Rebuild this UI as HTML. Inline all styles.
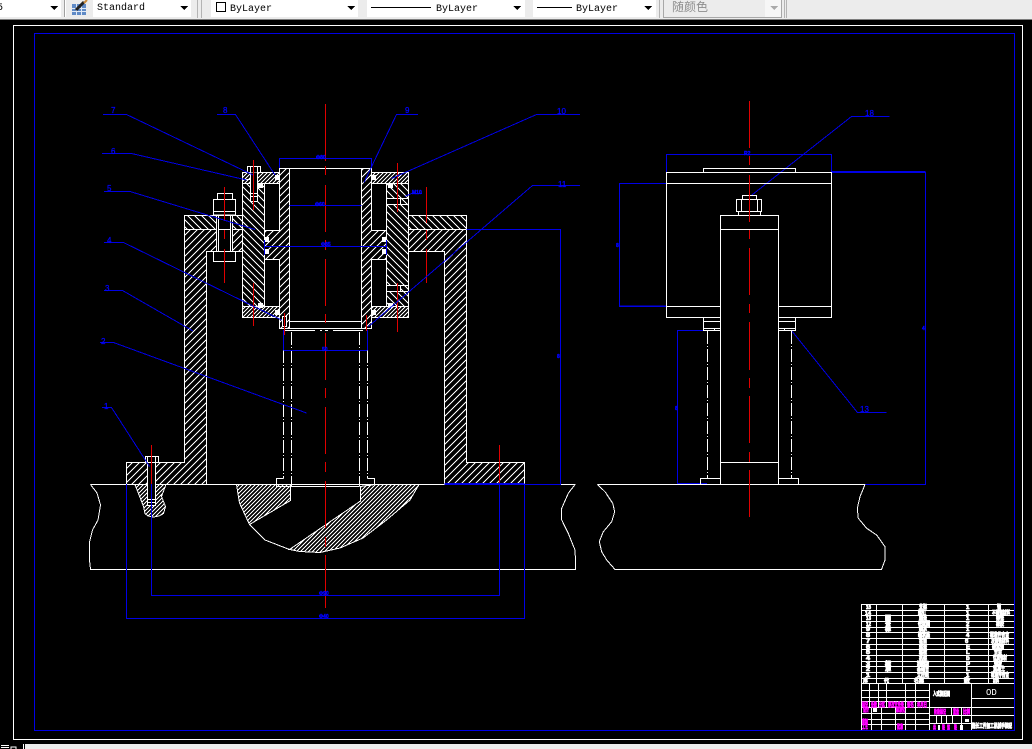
<!DOCTYPE html>
<html><head><meta charset="utf-8"><style>
html,body{margin:0;padding:0;background:#000;width:1032px;height:749px;overflow:hidden}
svg{display:block}
.w{stroke:#fff;fill:none}
.k{stroke:#fff;fill:#000}
.l{stroke:#0000e6;fill:none}
.r{stroke:#e00000;fill:none}
.t{font:8px "Liberation Sans",sans-serif;fill:#0000ff;stroke:#0000ff;stroke-width:.25}
.d{font:bold 5px "Liberation Sans",sans-serif;fill:#0000ff;stroke:#0000ff;stroke-width:.4}
.b{font:bold 6px "Liberation Sans","Noto Sans CJK SC",sans-serif;fill:#fff;stroke:#fff;stroke-width:.8}
.m{font:bold 6px "Liberation Sans","Noto Sans CJK SC",sans-serif;fill:#f0f;stroke:#f0f;stroke-width:.7}
.tb{font:10px "Liberation Mono",monospace;fill:#000}
</style></head><body>
<svg xmlns="http://www.w3.org/2000/svg" width="1032" height="749" viewBox="0 0 1032 749" shape-rendering="crispEdges">
<defs>
<pattern id="h1" patternUnits="userSpaceOnUse" width="7" height="7"><path d="M0 7L7 0M-1 1L1 -1M6 8L8 6" stroke="#fff" stroke-width="1"/></pattern>
<pattern id="h2" patternUnits="userSpaceOnUse" width="7" height="7"><path d="M0 0L7 7M-1 6L1 8M6 -1L8 1" stroke="#fff" stroke-width="1"/></pattern>
<pattern id="d1" patternUnits="userSpaceOnUse" width="4" height="4"><path d="M0 4L4 0M-1 1L1 -1M3 5L5 3" stroke="#fff" stroke-width="1"/></pattern>
</defs>
<rect width="1032" height="749" fill="#000"/>

<!-- toolbar -->
<rect x="0" y="0" width="1032" height="19" fill="#ececec"/>
<rect x="0" y="19" width="1032" height="1" fill="#7d7d7d"/>
<rect x="0" y="0" width="61" height="17" fill="#fff"/>
<text x="-3" y="10" class="tb">5</text>
<path d="M50 6h8l-4 4z" fill="#000"/>
<rect x="64" y="0" width="1" height="17" fill="#a0a0a0"/><rect x="65" y="0" width="1" height="17" fill="#fff"/>
<rect x="72" y="4" width="14" height="11" fill="#5f8ac6"/>
<path d="M72 8.500h14M72 11.500h14M76.500 4v11M81.500 4v11" stroke="#dfe9f6" stroke-width="1"/>
<path d="M76 10L84 2" stroke="#222" stroke-width="3" shape-rendering="auto"/>
<path d="M84 3L87 0" stroke="#c98a3c" stroke-width="2" shape-rendering="auto"/>
<rect x="93" y="0" width="98" height="17" fill="#fff"/>
<text x="97" y="10" class="tb">Standard</text>
<path d="M180 6h8l-4 4z" fill="#000"/>
<path d="M197.500 0v18M201.500 0v18" stroke="#b4b4b4"/>
<rect x="211" y="0" width="147" height="17" fill="#fff"/>
<rect x="216.500" y="2.500" width="9" height="9" fill="#fff" stroke="#000"/>
<text x="230" y="11" class="tb">ByLayer</text>
<path d="M347 6h8l-4 4z" fill="#000"/>
<rect x="367" y="0" width="158" height="17" fill="#fff"/>
<rect x="371" y="7" width="60" height="1" fill="#000"/>
<text x="436" y="11" class="tb">ByLayer</text>
<path d="M513 6h8l-4 4z" fill="#000"/>
<rect x="533" y="0" width="123" height="17" fill="#fff"/>
<rect x="537" y="7" width="35" height="1" fill="#000"/>
<text x="576" y="11" class="tb">ByLayer</text>
<path d="M644 6h8l-4 4z" fill="#000"/>
<rect x="663.500" y="-1" width="118" height="18.500" fill="#ececec" stroke="#a8a8a8"/>
<rect x="765" y="0" width="16" height="17" fill="#f6f6f6"/>
<text x="672" y="11" font-family="'Liberation Sans','Noto Sans CJK SC',sans-serif" font-size="12" fill="#8e8e8e">随颜色</text>
<path d="M770 6h8l-4 4z" fill="#aaa"/>
<path d="M659.500 0v18M784.500 0v18M786.500 0v18" stroke="#b4b4b4"/>

<!-- frames -->
<path d="M13.500 739.500V25.500H1022.500V739.500Z" class="w"/>
<path d="M34.500 730.500V33.500H1014.500V730.500Z" class="l"/>

<!-- bottom strip -->
<rect x="25" y="744" width="1007" height="5" fill="#ececec"/>
<rect x="1" y="745" width="8" height="1" fill="#fff"/><rect x="1" y="747" width="8" height="1" fill="#fff"/>
<path d="M11 749v-2h5v2" stroke="#fff" fill="none"/>
<rect x="23" y="744" width="1" height="5" fill="#fff"/>

<!-- LEFT VIEW: ground -->
<path d="M90.500 484.500H575.500" class="w"/>
<path d="M90.500 484.500L97 493L100.500 505L98 520L92.500 530L89.500 542V560L90.500 569.500H575.500L575.700 565L575 550L568.300 533.300L561.700 520V508.300L568.300 493.300L575 484.500" class="w"/>

<!-- bracket -->
<path d="M184.500 229.500H242.500V251.500H206.500V484.500H126.500V462.500H184.500Z" fill="url(#h1)" stroke="#fff"/>
<rect x="184.500" y="215.500" width="58" height="14" fill="url(#h2)" stroke="#fff"/>
<rect x="408.500" y="215.500" width="58" height="14" fill="url(#h2)" stroke="#fff"/>
<path d="M408.500 229.500H466.500V462.500H524.500V484.500H444.500V251.500H408.500Z" fill="url(#h1)" stroke="#fff"/>

<!-- housing -->
<rect x="242.500" y="183.500" width="22" height="123" fill="url(#h2)" stroke="#fff"/>
<rect x="386.500" y="183.500" width="22" height="123" fill="url(#h2)" stroke="#fff"/>
<rect x="242.500" y="172.500" width="37" height="11" fill="url(#d1)" stroke="#fff"/>
<rect x="371.500" y="172.500" width="37" height="11" fill="url(#d1)" stroke="#fff"/>
<rect x="242.500" y="306.500" width="37" height="11" fill="url(#d1)" stroke="#fff"/>
<rect x="371.500" y="306.500" width="37" height="11" fill="url(#d1)" stroke="#fff"/>

<!-- tube -->
<path d="M279.500 168.500H289.500V328.500H279.500V259.500H264.500V230.500H279.500Z" fill="url(#h1)" stroke="#fff"/>
<path d="M361.500 168.500H371.500V230.500H386.500V259.500H371.500V328.500H361.500Z" fill="url(#h1)" stroke="#fff"/>
<path d="M289.500 168.500H361.500M289.500 321.500H361.500M279.500 328.500H371.500" class="w"/>
<path d="M285 330.500h30M320 330.500h2M325 330.500h3M333 330.500h30" class="w"/>
<rect x="264.500" y="183.500" width="15" height="47" class="k"/>
<rect x="264.500" y="259.500" width="15" height="47" class="k"/>
<rect x="371.500" y="183.500" width="15" height="47" class="k"/>
<rect x="371.500" y="259.500" width="15" height="47" class="k"/>

<!-- right housing bolt holes -->
<path d="M386.500 198.500H408.500M386.500 204.500H408.500M400.500 197V205M386.500 285.500H408.500M386.500 291.500H408.500M400.500 285V292" class="w"/>
<rect x="387" y="199" width="13" height="5" fill="#000"/>
<rect x="387" y="286" width="13" height="5" fill="#000"/>

<!-- big bolt left -->
<rect x="217.500" y="193.500" width="15" height="6" class="k"/>
<rect x="213.500" y="199.500" width="22" height="15.500" class="k"/>
<path d="M213.500 211.500H235.500M224.500 199.500V211.500" class="w"/>
<rect x="216.500" y="215.500" width="16" height="36" class="k"/>
<path d="M218.500 215.500V251.500M230.500 215.500V251.500M218.500 229.500H230.500" class="w"/>
<rect x="213.500" y="251.500" width="22" height="10" class="k"/>
<path d="M224.500 251.500V261.500" class="w"/>

<!-- small bolt -->
<rect x="247.500" y="166.500" width="13" height="6" class="k"/>
<path d="M250.500 166.500V172.500M257.500 166.500V172.500" class="w"/>
<path d="M250.500 172.500V201.500H257.500V172.500" class="k"/>
<path d="M250.500 193.500H257.500M250.500 196.500H257.500" class="w"/>
<path d="M242.500 179.500H250.500" class="w"/>

<!-- balls -->
<g fill="#fff">
<rect x="275" y="175" width="5" height="5"/><rect x="258" y="183" width="5" height="5"/><rect x="264" y="237" width="5" height="5"/><rect x="264" y="249" width="5" height="5"/><rect x="258" y="303" width="5" height="5"/><rect x="275" y="310" width="5" height="5"/>
<rect x="372" y="175" width="4" height="5"/><rect x="388" y="183" width="5" height="5"/><rect x="382" y="237" width="5" height="5"/><rect x="382" y="249" width="5" height="5"/><rect x="388" y="303" width="5" height="5"/><rect x="372" y="310" width="4" height="5"/>
</g>
<rect x="282.500" y="316.500" width="4" height="10" class="k"/>

<!-- dash dot lower shaft -->
<path d="M283.500 332V478.500M291.500 332V486.500" class="w" stroke-dasharray="13 2 1 2"/>
<path d="M359.500 332V486.500M367.500 332V478.500" class="w" stroke-dasharray="13 2 1 2"/>
<path d="M283.500 478.500H276.500V486.500H359.500M367.500 478.500H374.500V484.500" class="w"/>

<!-- anchor bolt -->
<path d="M135 484.500L143.500 506.500L145 513.500L148 516L153.500 517L159 516L163.500 513.500L165.500 506.500L161.500 496.500L166 484.500Z" fill="url(#d1)" stroke="#fff"/>
<rect x="145.500" y="456.500" width="13" height="6" class="k"/>
<path d="M147.500 456.500V462.500M155.500 456.500V462.500" class="w"/>
<rect x="147.500" y="462.500" width="8" height="43" class="k"/>
<path d="M147.500 499.500H155.500M147.500 502.500H155.500" class="w"/>

<!-- ground hole hatch -->
<path d="M236.500 484.500L239.500 503L249.500 524.500L290.500 500.500V484.500Z" fill="url(#d1)" stroke="#fff"/>
<path d="M289.500 549.500L340 515L360.500 501V486.500L374.500 484.500H419L410 500L386.500 520L363 538L340 548L320 552.500L300 551.500Z" fill="url(#d1)" stroke="#fff"/>
<path d="M249.500 524.500L265 540L289.500 549.500" class="w"/>

<!-- centre / red lines -->
<path d="M325.500 104V161M325.500 166V175M325.500 185V232M325.500 240V250M325.500 259V306M325.500 314V323M325.500 333V380M325.500 388V398M325.500 407V454M325.500 462V472M325.500 481V528M325.500 537V547M325.500 555V608" class="r"/>
<path d="M224.500 187V221M224.500 230V239M224.500 249V283M253.500 160V210M253.500 283V326M397.500 163V212M397.500 283V332M426.500 187V223M426.500 230V240M426.500 249V283M284.500 313V335M366.500 315V331M151.500 445V484M499.500 445V484" class="r"/>

<!-- leaders -->
<g class="l">
<path d="M103 114.500H126.500L253 175"/>
<path d="M102 153.500H131.500L246.500 180"/>
<path d="M217 114.500H235.500L275 175"/>
<path d="M104 191.500H130L255 229.500"/>
<path d="M104 242.500H123.500L281.500 320"/>
<path d="M104 290.500H122.500L193 331"/>
<path d="M100 342.500H113.500L306.500 413"/>
<path d="M102 407.500H111.500L149.500 466.500"/>
<path d="M418 114.500H396.500L364 182.500"/>
<path d="M580 114.500H536.500L391.500 178.500"/>
<path d="M580 185.500H532.500L368.500 326.500"/>
<path d="M405 196.500L411.500 193.500H422"/>
<!-- dims -->
<path d="M279.500 158.500H371.500M279.500 158V168M371.500 158V168"/>
<path d="M289.500 205.500H361.500"/>
<path d="M264.500 246.500H386.500M264.500 240V255M386.500 240V255"/>
<path d="M283.500 350.500H367.500M283.500 330V350M367.500 330V350"/>
<path d="M151.500 484V595.500H499.500V484"/>
<path d="M126.500 484V618.500H524.500V484"/>
<path d="M444.500 484.500H560.500V229.500H466.500"/>
<path d="M444.500 483.500H524.500"/>
<!-- right view dims -->
<path d="M666.500 154.500H831.500M666.500 154V172M831.500 154V172"/>
<path d="M666 183.500H619.500V306.500H666M619.500 306H666"/>
<path d="M831 172.500H925.500V484.500H798.500M831 171.500H925.500"/>
<path d="M703 330.500H677.500V484.500H707M677 483.500H707"/>
<path d="M889.500 116.500H851.500L750 196.500"/>
<path d="M791.500 330.500L857.500 412.500H886.500"/>
</g>

<!-- blue labels -->
<text x="111" y="113" class="t">7</text>
<text x="111" y="154" class="t">6</text>
<text x="223" y="113" class="t">8</text>
<text x="107" y="191" class="t">5</text>
<text x="107" y="243" class="t">4</text>
<text x="105" y="291" class="t">3</text>
<text x="101" y="344" class="t">2</text>
<text x="104" y="409" class="t">1</text>
<text x="405" y="113" class="t">9</text>
<text x="557" y="114" class="t">10</text>
<text x="558" y="187" class="t">11</text>
<text x="865" y="116" class="t">18</text>
<text x="860" y="412" class="t">13</text>
<text x="316" y="159" class="d">Φ80</text>
<text x="315" y="206" class="d">Φ60</text>
<text x="321" y="246" class="d">Φ85</text>
<text x="322" y="351" class="d">50</text>
<text x="412" y="194" class="d">M10</text>
<text x="319" y="595" class="d">Φ90</text>
<text x="319" y="618" class="d">Φ40</text>
<text x="557" y="358" class="d">8</text>
<text x="744" y="155" class="d">R2</text>
<text x="616" y="247" class="d">8</text>
<text x="922" y="330" class="d">4</text>
<text x="675" y="410" class="d">8</text>

<!-- RIGHT VIEW -->
<path d="M597.500 484.500H865" class="w"/>
<path d="M597.500 484.500L605 491.700L612.700 503.300L614.700 511.700L611.700 521.700L603.300 531.700L599.300 541.700L601.700 551.700L606.700 560L615 569.500H881.500L885 560V546.700L876.700 535L866.700 528.300L858.300 518.300L857.300 508.300L860 496.700L865 484.500" class="w"/>
<rect x="666.500" y="172.500" width="165" height="145" class="w"/>
<rect x="703.500" y="168.500" width="92" height="4" class="w"/>
<path d="M666.500 183.500H831.500M666.500 306.500H831.500" class="w"/>
<rect x="703.500" y="317.500" width="92" height="13" class="w"/>
<path d="M703.500 321.500H795.500M703.500 328.500H795.500M714.500 328.500V331M784.500 328.500V331" class="w"/>
<rect x="720.500" y="215.500" width="58" height="269" class="k"/>
<path d="M720.500 229.500H778.500M720.500 462.500H778.500" class="w"/>
<rect x="742.500" y="195.500" width="14" height="4" class="k"/>
<rect x="736.500" y="199.500" width="25" height="12" class="k"/>
<path d="M741.500 199.500V211.500M757.500 199.500V211.500" class="w"/>
<rect x="738.500" y="211.500" width="22" height="4" class="k"/>
<path d="M707.500 331V478M791.500 331V478" class="w" stroke-dasharray="13 2 1 2"/>
<path d="M720.500 478.500H700.500V484.500M778.500 478.500H798.500V484.500" class="w"/>
<path d="M749.500 101V148M749.500 156V165M749.500 175V222M749.500 230V239M749.500 248V295M749.500 304V313M749.500 322V370M749.500 378V388M749.500 396V443M749.500 452V462M749.500 470V517" class="r"/>

<!-- TITLE BLOCK -->
<rect x="861.500" y="604.500" width="153" height="126" fill="#000" stroke="#fff"/>
<path class="w" d="M861 610.500H1014M861 615.500H1014M861 621.500H1014M861 627.500H1014M861 632.500H1014M861 638.500H1014M861 644.500H1014M861 649.500H1014M861 655.500H1014M861 661.500H1014M861 666.500H1014M861 672.500H1014M861 678.500H1014M861 683.500H1014"/>
<path class="w" d="M876.500 604V683M902.500 604V683M944.500 604V683M988.500 604V683"/>
<path class="w" d="M861 690.500H929M861 697.500H929M861 701.500H929M861 707.500H1014M861 713.500H929M861 719.500H929M861 724.500H929"/>
<path class="w" d="M869.500 683V707M878.500 683V707M886.500 683V707M905.500 683V707M915.500 683V707M871.500 707V731M881.500 707V731M895.500 707V731M905.500 707V731M915.500 707V731"/>
<path class="w" d="M929.500 683V731M971.500 683V731M971.500 698.500H1014M929.500 715.500H1014M929.500 723.500H971.500M936.500 715V723M941.500 715V723M946.500 715V723M952.500 715V723M951.500 707V715M961.500 707V731"/>

<g>
<text x="866" y="609" class="b" textLength="5" lengthAdjust="spacingAndGlyphs">15</text>
<text x="865" y="615" class="b" textLength="6" lengthAdjust="spacingAndGlyphs">14</text>
<text x="866" y="620" class="b" textLength="5" lengthAdjust="spacingAndGlyphs">13</text>
<text x="866" y="626" class="b" textLength="5" lengthAdjust="spacingAndGlyphs">12</text>
<text x="866" y="631" class="b" textLength="4" lengthAdjust="spacingAndGlyphs">9</text>
<text x="866" y="637" class="b" textLength="4" lengthAdjust="spacingAndGlyphs">8</text>
<text x="866" y="643" class="b" textLength="4" lengthAdjust="spacingAndGlyphs">7</text>
<text x="866" y="649" class="b" textLength="4" lengthAdjust="spacingAndGlyphs">6</text>
<text x="866" y="654" class="b" textLength="4" lengthAdjust="spacingAndGlyphs">5</text>
<text x="866" y="660" class="b" textLength="4" lengthAdjust="spacingAndGlyphs">4</text>
<text x="866" y="666" class="b" textLength="4" lengthAdjust="spacingAndGlyphs">3</text>
<text x="866" y="671" class="b" textLength="4" lengthAdjust="spacingAndGlyphs">2</text>
<text x="866" y="677" class="b" textLength="4" lengthAdjust="spacingAndGlyphs">1</text>
<text x="863" y="683" class="b" textLength="5" lengthAdjust="spacingAndGlyphs">序</text>

<text x="885" y="620" class="b" textLength="6" lengthAdjust="spacingAndGlyphs">图</text>
<text x="885" y="626" class="b" textLength="6" lengthAdjust="spacingAndGlyphs">号</text>
<text x="885" y="631" class="b" textLength="6" lengthAdjust="spacingAndGlyphs">标</text>
<text x="885" y="666" class="b" textLength="6" lengthAdjust="spacingAndGlyphs">标</text>
<text x="885" y="671" class="b" textLength="6" lengthAdjust="spacingAndGlyphs">准</text>
<text x="884" y="683" class="b" textLength="5" lengthAdjust="spacingAndGlyphs">代</text>

<text x="919" y="609" class="b" textLength="8" lengthAdjust="spacingAndGlyphs">支架</text>
<text x="918" y="615" class="b" textLength="8" lengthAdjust="spacingAndGlyphs">螺钉</text>
<text x="919" y="620" class="b" textLength="8" lengthAdjust="spacingAndGlyphs">端盖</text>
<text x="918" y="626" class="b" textLength="12" lengthAdjust="spacingAndGlyphs">密封圈</text>
<text x="919" y="631" class="b" textLength="8" lengthAdjust="spacingAndGlyphs">轴承</text>
<text x="918" y="637" class="b" textLength="12" lengthAdjust="spacingAndGlyphs">轴承座</text>
<text x="919" y="643" class="b" textLength="8" lengthAdjust="spacingAndGlyphs">套筒</text>
<text x="919" y="649" class="b" textLength="8" lengthAdjust="spacingAndGlyphs">螺母</text>
<text x="919" y="654" class="b" textLength="8" lengthAdjust="spacingAndGlyphs">螺栓</text>
<text x="919" y="660" class="b" textLength="8" lengthAdjust="spacingAndGlyphs">机架</text>
<text x="917" y="666" class="b" textLength="12" lengthAdjust="spacingAndGlyphs">地脚螺栓</text>
<text x="917" y="671" class="b" textLength="12" lengthAdjust="spacingAndGlyphs">基础台</text>
<text x="917" y="677" class="b" textLength="12" lengthAdjust="spacingAndGlyphs">立柱组</text>
<text x="914" y="683" class="b" textLength="10" lengthAdjust="spacingAndGlyphs">名称</text>

<text x="966" y="609" class="b" textLength="3">1</text>
<text x="966" y="615" class="b" textLength="3">1</text>
<text x="966" y="620" class="b" textLength="3">1</text>
<text x="966" y="626" class="b" textLength="3">2</text>
<text x="966" y="631" class="b" textLength="3">1</text>
<text x="966" y="637" class="b" textLength="3">4</text>
<text x="965" y="643" class="b" textLength="4">6</text>
<text x="966" y="649" class="b" textLength="3">E</text>
<text x="966" y="654" class="b" textLength="3">L</text>
<text x="966" y="660" class="b" textLength="3">b</text>
<text x="966" y="666" class="b" textLength="3">P</text>
<text x="966" y="671" class="b" textLength="3">L</text>
<text x="966" y="677" class="b" textLength="3">1</text>
<text x="964" y="683" class="b" textLength="6">数</text>

<text x="997" y="609" class="b" textLength="4" lengthAdjust="spacingAndGlyphs">钢</text>
<text x="992" y="615" class="b" textLength="18" lengthAdjust="spacingAndGlyphs">不锈钢材料</text>
<text x="996" y="620" class="b" textLength="8" lengthAdjust="spacingAndGlyphs">铸铁</text>
<text x="996" y="626" class="b" textLength="8" lengthAdjust="spacingAndGlyphs">橡胶</text>
<text x="990" y="637" class="b" textLength="19" lengthAdjust="spacingAndGlyphs">标准件合金</text>
<text x="991" y="643" class="b" textLength="18" lengthAdjust="spacingAndGlyphs">灰铸铁材料</text>
<text x="992" y="649" class="b" textLength="12" lengthAdjust="spacingAndGlyphs">碳素钢</text>
<text x="994" y="654" class="b" textLength="8" lengthAdjust="spacingAndGlyphs">合金</text>
<text x="993" y="660" class="b" textLength="14" lengthAdjust="spacingAndGlyphs">优质钢材</text>
<text x="994" y="666" class="b" textLength="8" lengthAdjust="spacingAndGlyphs">钢板</text>
<text x="993" y="671" class="b" textLength="12" lengthAdjust="spacingAndGlyphs">混凝土</text>
<text x="991" y="677" class="b" textLength="18" lengthAdjust="spacingAndGlyphs">标准件合金</text>
<text x="993" y="683" class="b" textLength="6" lengthAdjust="spacingAndGlyphs">材料</text>

<text x="933" y="696" class="b" textLength="17" lengthAdjust="spacingAndGlyphs">入式装配图</text>
<text x="986" y="695" font-family="Liberation Mono" font-size="9" fill="#fff">OD</text>
<text x="972" y="728" class="b" textLength="40" lengthAdjust="spacingAndGlyphs">超长工件加工机械手装配</text>

<text x="862" y="707" class="m" textLength="6" lengthAdjust="spacingAndGlyphs">标记</text>
<text x="871" y="707" class="m" textLength="6" lengthAdjust="spacingAndGlyphs">处数</text>
<text x="879" y="707" class="m" textLength="6" lengthAdjust="spacingAndGlyphs">分区</text>
<text x="888" y="707" class="m" textLength="16" lengthAdjust="spacingAndGlyphs">更改文件号</text>
<text x="907" y="707" class="m" textLength="7" lengthAdjust="spacingAndGlyphs">签名</text>
<text x="917" y="707" class="m" textLength="10" lengthAdjust="spacingAndGlyphs">年月日</text>
<text x="863" y="712" class="m" textLength="6" lengthAdjust="spacingAndGlyphs">设计</text>
<rect x="873" y="708" width="4" height="4" fill="#fff"/>
<text x="896" y="712" class="m" textLength="9" lengthAdjust="spacingAndGlyphs">标准化</text>
<text x="862" y="724" class="m" textLength="6" lengthAdjust="spacingAndGlyphs">审核</text>
<text x="862" y="729" class="m" textLength="6" lengthAdjust="spacingAndGlyphs">工艺</text>
<text x="897" y="729" class="m" textLength="6" lengthAdjust="spacingAndGlyphs">批准</text>
<text x="934" y="714" class="m" textLength="12" lengthAdjust="spacingAndGlyphs">阶段标记</text>
<text x="953" y="714" class="m" textLength="6" lengthAdjust="spacingAndGlyphs">重量</text>
<text x="963" y="714" class="m" textLength="7" lengthAdjust="spacingAndGlyphs">比例</text>
<rect x="965" y="719" width="4" height="3" fill="#fff"/>
<text x="933" y="730" class="m" textLength="3" lengthAdjust="spacingAndGlyphs">共</text>
<text x="942" y="730" class="m" textLength="3" lengthAdjust="spacingAndGlyphs">张</text>
<text x="947" y="730" class="m" textLength="3" lengthAdjust="spacingAndGlyphs">第</text>
<text x="954" y="730" class="m" textLength="3" lengthAdjust="spacingAndGlyphs">张</text>
<rect x="938" y="725" width="2" height="5" fill="#fff"/>
<rect x="960" y="725" width="3" height="5" fill="#fff"/>
</g>
<path d="M1014.500 604V731" class="l"/>
<path d="M855 730.500H1014" class="l"/>
</svg>
</body></html>
